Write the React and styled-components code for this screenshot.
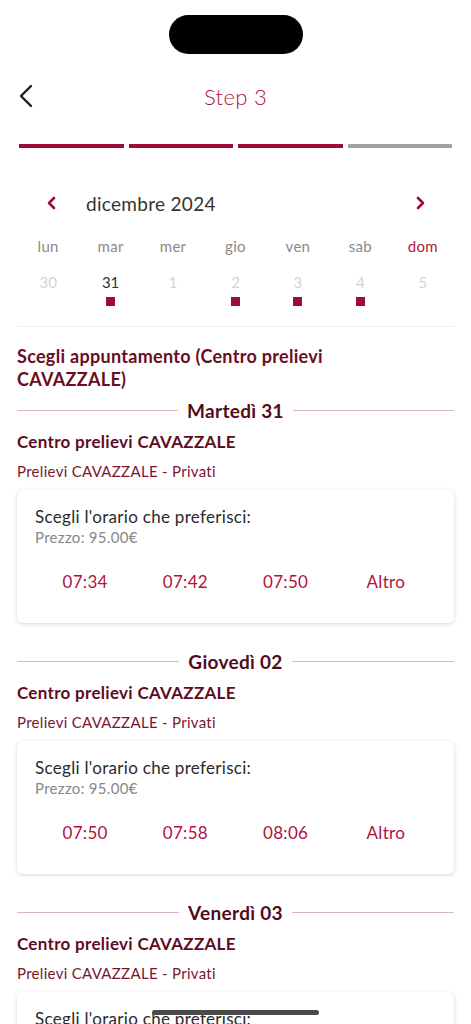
import React from 'react'
import styled, { createGlobalStyle } from 'styled-components'

const GlobalStyle = createGlobalStyle`
  html, body {
    margin: 0;
    padding: 0;
    background: #ffffff;
    font-family: Lato, 'Noto Sans', sans-serif;
    overflow: hidden;
  }
`

const Page = styled.div`
  display: flex;
  flex-direction: column;
  width: 471px;
`

const StatusBar = styled.div`
  display: flex;
  justify-content: center;
  padding-top: 15px;
`

const Island = styled.div`
  width: 134px;
  height: 39px;
  border-radius: 20px;
  background: #000;
`

const Header = styled.div`
  position: relative;
  display: flex;
  align-items: center;
  justify-content: center;
  height: 44px;
  margin-top: 20px;
`

const BackButton = styled.button`
  position: absolute;
  left: 14px;
  top: 9px;
  width: 24px;
  height: 26px;
  padding: 0;
  border: none;
  background: none;
  display: flex;
  align-items: center;
  justify-content: center;
`

const Title = styled.h1`
  margin: 0;
  font-size: 22px;
  font-weight: 300;
  color: #b3123c;
  letter-spacing: 0.3px;
`

const Progress = styled.div`
  display: grid;
  grid-template-columns: repeat(4, 1fr);
  gap: 5px;
  padding: 0 19px;
  margin-top: 26px;
`

const Segment = styled.div`
  height: 4px;
  background: ${p => (p.done ? '#a00b34' : '#a0a0a0')};
`

const Calendar = styled.div`
  display: flex;
  flex-direction: column;
  padding: 0 17px;
  margin-top: 40px;
`

const MonthRow = styled.div`
  display: flex;
  align-items: center;
  height: 30px;
`

const NavButton = styled.button`
  width: 24px;
  height: 24px;
  padding: 0;
  border: none;
  background: none;
  display: flex;
  align-items: center;
  justify-content: center;
  margin-left: ${p => (p.right ? 'auto' : '23px')};
  margin-right: ${p => (p.right ? '22px' : '0')};
`

const MonthLabel = styled.span`
  margin-left: 22px;
  font-size: 19px;
  letter-spacing: 0.3px;
  color: #333;
`

const WeekGrid = styled.div`
  display: grid;
  grid-template-columns: repeat(7, 1fr);
  margin-top: ${p => p.mt}px;
`

const DayName = styled.span`
  text-align: center;
  font-size: 15px;
  line-height: 20px;
  letter-spacing: 0.3px;
  color: ${p => (p.sunday ? '#b5173f' : '#8a8a8a')};
`

const DayCell = styled.div`
  display: flex;
  flex-direction: column;
  align-items: center;
`

const DayNumber = styled.span`
  font-size: 15px;
  line-height: 20px;
  color: ${p => (p.active ? '#333' : '#d4d4d4')};
`

const Dot = styled.span`
  width: 9px;
  height: 9px;
  margin-top: 5px;
  background: ${p => (p.show ? '#a00b34' : 'transparent')};
`

const Divider = styled.hr`
  margin: 20px 17px 0;
  border: none;
  border-top: 1px solid #eeeeee;
`

const Content = styled.div`
  display: flex;
  flex-direction: column;
  padding: 0 17px;
  letter-spacing: 0.3px;
`

const SectionTitle = styled.h2`
  max-width: 345px;
  margin: 18px 0 0;
  font-size: 18px;
  line-height: 23px;
  font-weight: 700;
  color: #6a0d22;
`

const DayHeading = styled.div`
  display: flex;
  align-items: center;
  gap: 9px;
  margin-top: ${p => p.mt}px;
  height: 26px;

  &::before,
  &::after {
    content: '';
    flex: 1;
    height: 1px;
    background: #dbb7c1;
  }
`

const DayHeadingText = styled.span`
  font-size: 19px;
  font-weight: 700;
  color: #520b1b;
`

const CenterName = styled.div`
  margin-top: 8px;
  font-size: 17px;
  line-height: 22px;
  font-weight: 700;
  color: #5e0c1f;
`

const ServiceName = styled.div`
  margin-top: 8px;
  font-size: 15px;
  line-height: 20px;
  color: #7a1530;
`

const Card = styled.div`
  margin-top: 9px;
  padding: 16px 18px 30px;
  border-radius: 6px;
  background: #fff;
  box-shadow: 0 1px 4px rgba(0, 0, 0, 0.16);
`

const CardTitle = styled.div`
  font-size: 17px;
  line-height: 22px;
  color: #2b2b2b;
`

const Price = styled.div`
  font-size: 15px;
  line-height: 18px;
  color: #888;
`

const Slots = styled.div`
  display: grid;
  grid-template-columns: repeat(4, 1fr);
  margin-top: 25px;
`

const Slot = styled.button`
  padding: 0;
  border: none;
  background: none;
  font-family: inherit;
  font-size: 17px;
  line-height: 22px;
  letter-spacing: 0.3px;
  color: #b0123c;
  text-align: center;
`

const HomeIndicator = styled.div`
  position: fixed;
  left: 152px;
  bottom: 9px;
  width: 167px;
  height: 5px;
  border-radius: 3px;
  background: #4a4a4a;
`

const Chevron = ({ dir = 'left', color = '#a00b34', size = 14, width = 2.6 }) => (
  <svg width={size} height={size} viewBox="0 0 14 14" fill="none">
    <polyline
      points={dir === 'left' ? '9,2 4,7 9,12' : '5,2 10,7 5,12'}
      stroke={color}
      strokeWidth={width}
      strokeLinecap="round"
      strokeLinejoin="round"
    />
  </svg>
)

const weekdays = ['lun', 'mar', 'mer', 'gio', 'ven', 'sab', 'dom']
const days = [
  { n: 30, active: false, dot: false },
  { n: 31, active: true, dot: true },
  { n: 1, active: false, dot: false },
  { n: 2, active: false, dot: true },
  { n: 3, active: false, dot: true },
  { n: 4, active: false, dot: true },
  { n: 5, active: false, dot: false },
]

const appointments = [
  { day: 'Martedì 31', slots: ['07:34', '07:42', '07:50'] },
  { day: 'Giovedì 02', slots: ['07:50', '07:58', '08:06'] },
  { day: 'Venerdì 03', slots: ['07:42', '07:50', '07:58'] },
]

export default function App() {
  return (
    <Page>
      <GlobalStyle />
      <StatusBar>
        <Island />
      </StatusBar>
      <Header>
        <BackButton>
          <svg width="16" height="24" viewBox="0 0 16 24" fill="none">
            <polyline points="13,2 3,12 13,22" stroke="#1a1a1a" strokeWidth="2.4" strokeLinecap="round" strokeLinejoin="round" />
          </svg>
        </BackButton>
        <Title>Step 3</Title>
      </Header>
      <Progress>
        <Segment done />
        <Segment done />
        <Segment done />
        <Segment />
      </Progress>

      <Calendar>
        <MonthRow>
          <NavButton>
            <Chevron dir="left" />
          </NavButton>
          <MonthLabel>dicembre 2024</MonthLabel>
          <NavButton right>
            <Chevron dir="right" />
          </NavButton>
        </MonthRow>
        <WeekGrid mt={18}>
          {weekdays.map(d => (
            <DayName key={d} sunday={d === 'dom'}>{d}</DayName>
          ))}
        </WeekGrid>
        <WeekGrid mt={16}>
          {days.map(d => (
            <DayCell key={d.n}>
              <DayNumber active={d.active}>{d.n}</DayNumber>
              <Dot show={d.dot} />
            </DayCell>
          ))}
        </WeekGrid>
      </Calendar>
      <Divider />

      <Content>
        <SectionTitle>Scegli appuntamento (Centro prelievi CAVAZZALE)</SectionTitle>
        {appointments.map((a, i) => (
          <React.Fragment key={a.day}>
            <DayHeading mt={i === 0 ? 6 : 25}>
              <DayHeadingText>{a.day}</DayHeadingText>
            </DayHeading>
            <CenterName>Centro prelievi CAVAZZALE</CenterName>
            <ServiceName>Prelievi CAVAZZALE - Privati</ServiceName>
            <Card>
              <CardTitle>Scegli l'orario che preferisci:</CardTitle>
              <Price>Prezzo: 95.00€</Price>
              <Slots>
                {a.slots.map(s => (
                  <Slot key={s}>{s}</Slot>
                ))}
                <Slot>Altro</Slot>
              </Slots>
            </Card>
          </React.Fragment>
        ))}
      </Content>
      <HomeIndicator />
    </Page>
  )
}
